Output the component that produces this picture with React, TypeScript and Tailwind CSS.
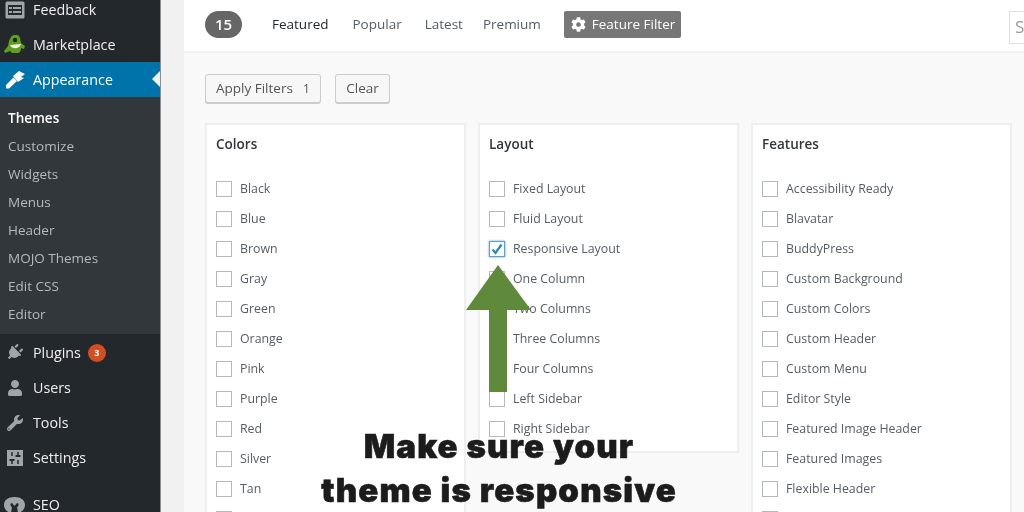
import React from "react";
import { FaCog, FaPlug, FaUser, FaWrench } from "react-icons/fa";

const colors = ["Black", "Blue", "Brown", "Gray", "Green", "Orange", "Pink", "Purple", "Red", "Silver", "Tan", "Turquoise"];
const layout = ["Fixed Layout", "Fluid Layout", "Responsive Layout", "One Column", "Two Columns", "Three Columns", "Four Columns", "Left Sidebar", "Right Sidebar"];
const features = ["Accessibility Ready", "Blavatar", "BuddyPress", "Custom Background", "Custom Colors", "Custom Header", "Custom Menu", "Editor Style", "Featured Image Header", "Featured Images", "Flexible Header", "Footer Widgets"];
const submenu = ["Customize", "Widgets", "Menus", "Header", "MOJO Themes", "Edit CSS", "Editor"];

function FeedbackIcon() {
  return (
    <svg width="20" height="18" viewBox="0 0 20 18">
      <rect x="0.5" y="0.5" width="19" height="17" rx="1.5" fill="#a0a5aa" />
      <rect x="3" y="4" width="14" height="10" fill="#23282d" />
      <rect x="4" y="6" width="3" height="2" fill="#a0a5aa" />
      <rect x="8" y="6" width="8" height="2" fill="#a0a5aa" />
      <rect x="4" y="10" width="3" height="2" fill="#a0a5aa" />
      <rect x="8" y="10" width="8" height="2" fill="#a0a5aa" />
    </svg>
  );
}

function MojoIcon() {
  return (
    <svg width="22" height="20" viewBox="0 0 22 20">
      <path d="M7 2 C9 -1 15 -1 16 3 L17 8 L21 11 L20 14 L17 13 C17 16 16 18 13 18 L8 18 L6 16 L1 18 L0 16 L4 11 L5 6 Z" fill="#5f9e1f" />
      <circle cx="11" cy="5" r="2.2" fill="#16300a" />
      <path d="M6 10 L17 9 C16 14 8 15 6 10 Z" fill="#f2f2e2" />
    </svg>
  );
}

function BrushIcon() {
  return (
    <svg width="20" height="18" viewBox="0 0 20 18">
      <path d="M8 5 L14 0 L20 3 L16 6 L19 7 L13 11 Z" fill="#ffffff" />
      <path d="M8.5 6.5 L12 10 L4 17.5 L1 17.5 L1 14 Z" fill="#ffffff" />
    </svg>
  );
}

function SlidersIcon() {
  return (
    <svg width="16" height="16" viewBox="0 0 16 16">
      <rect width="16" height="16" fill="#a0a5aa" />
      <path d="M5 2 V6 M5 10 V14 M11 2 V6 M11 10 V14" stroke="#23282d" strokeWidth="1.5" />
      <path d="M2.5 10 H7.5 M8.5 6 H13.5" stroke="#23282d" strokeWidth="2" />
    </svg>
  );
}

function SeoIcon() {
  return (
    <svg width="21" height="16" viewBox="0 0 21 16">
      <path d="M10.5 0 C4 0 0 3 0 8 C0 12 3 15 7 16 L8 10 C6 9 6 6 8 6 L10.5 9 L13 6 C15 6 15 9 13 10 L14 16 C18 15 21 12 21 8 C21 3 17 0 10.5 0 Z" fill="#a0a5aa" />
    </svg>
  );
}

function MenuItem({ icon, label, badge }: { icon: React.ReactNode; label: string; badge?: string }) {
  return (
    <div className="flex h-[35px] shrink-0 items-center text-[14.3px] text-[#eeeeee]">
      <div className="flex w-[33px] shrink-0 justify-center pr-[4px] text-[#a0a5aa]">{icon}</div>
      <span>{label}</span>
      {badge && (
        <span className="ml-[7px] flex h-[18px] w-[18px] items-center justify-center rounded-full bg-[#d54e21] text-[9px] font-bold text-white">
          {badge}
        </span>
      )}
    </div>
  );
}

function Option({ label, checked }: { label: string; checked?: boolean }) {
  return (
    <div className="flex h-[30px] shrink-0 items-center gap-[8px] text-[12.35px] text-[#555d66]">
      <span
        className={
          checked
            ? "flex h-[16px] w-[16px] shrink-0 items-center justify-center border border-[#5b9dd9] bg-white shadow-[0_0_2px_rgba(30,140,190,0.8)]"
            : "h-[16px] w-[16px] shrink-0 border border-[#b4b9be] bg-white"
        }
      >
        {checked && (
          <svg width="12" height="12" viewBox="0 0 12 12">
            <path d="M1.5 6.5 L4.5 10 L10.5 1.5" fill="none" stroke="#1e8cbe" strokeWidth="2.2" />
          </svg>
        )}
      </span>
      <span className="whitespace-nowrap">{label}</span>
    </div>
  );
}

function FilterPanel({ title, items, className }: { title: string; items: string[]; className?: string }) {
  return (
    <div className={"flex w-[261px] shrink-0 flex-col overflow-hidden border-2 border-[#eeeeee] bg-white pl-[9px] " + (className ?? "")}>
      <h4 className="mt-[9px] mb-[20px] text-[13.5px] leading-[20px] font-semibold text-[#32373c]">{title}</h4>
      {items.map((item) => (
        <Option key={item} label={item} checked={item === "Responsive Layout"} />
      ))}
    </div>
  );
}

export default function App() {
  return (
    <div className="relative flex h-[512px] w-[1024px] overflow-hidden bg-[#f1f1f1] font-['Open_Sans',sans-serif] blur-[0.4px]">
      <aside className="-mt-[8px] flex w-[161px] shrink-0 flex-col overflow-hidden border-r border-[#8a8d90] bg-[#23282d]">
        <MenuItem icon={<FeedbackIcon />} label="Feedback" />
        <MenuItem icon={<MojoIcon />} label="Marketplace" />
        <div className="relative flex h-[35px] shrink-0 items-center bg-[#0073aa] text-[14.3px] text-white">
          <div className="flex w-[33px] shrink-0 justify-center pr-[4px]">
            <BrushIcon />
          </div>
          <span>Appearance</span>
          <span className="absolute top-[9px] right-0 h-0 w-0 border-y-[8px] border-r-[8px] border-y-transparent border-r-[#f1f1f1]" />
        </div>
        <div className="flex h-[237px] shrink-0 flex-col bg-[#32373c] pt-[7px] pl-[8px] text-[13.5px] text-[#b4b9be]">
          <div className="flex h-[28px] items-center font-semibold text-white">Themes</div>
          {submenu.map((s) => (
            <div key={s} className="flex h-[28px] shrink-0 items-center">
              {s}
            </div>
          ))}
        </div>
        <div className="h-[1px] shrink-0" />
        <MenuItem icon={<FaPlug size={17} className="rotate-45" />} label="Plugins" badge="3" />
        <MenuItem icon={<FaUser size={16} />} label="Users" />
        <MenuItem icon={<FaWrench size={16} />} label="Tools" />
        <MenuItem icon={<SlidersIcon />} label="Settings" />
        <div className="h-[12px] shrink-0" />
        <MenuItem icon={<SeoIcon />} label="SEO" />
      </aside>

      <main className="ml-[23px] flex min-w-0 flex-1 flex-col bg-[#f9f9f9]">
        <div className="flex h-[53px] shrink-0 items-center border-b-2 border-[#f1f1f1] bg-white pb-[3px] pl-[21px] text-[13.5px] text-[#555d66]">
          <span className="mt-[1px] flex h-[27px] w-[37px] items-center justify-center rounded-full bg-[#666666] text-[15px] font-semibold text-white">15</span>
          <span className="ml-[30px] text-[#23282d]">Featured</span>
          <span className="ml-[24px]">Popular</span>
          <span className="ml-[23px]">Latest</span>
          <span className="ml-[20px]">Premium</span>
          <span className="ml-[23px] flex h-[27px] w-[117px] items-center gap-[6px] rounded-[2px] bg-[#777777] pl-[7px] text-white">
            <FaCog size={15} />
            Feature Filter
          </span>
          <span className="mt-[6px] ml-auto h-[33px] w-[15px] overflow-hidden border border-r-0 border-[#dddddd] pl-[5px] text-[17px] leading-[30px] text-[#9a9a9a]">S</span>
        </div>

        <div className="mt-[21px] flex shrink-0 gap-[14px] pl-[21px] text-[13.5px] text-[#555555]">
          <div className="flex h-[29px] w-[116px] items-center rounded-[3px] border border-[#cccccc] bg-[#f7f7f7] pl-[10px] shadow-[0_1px_0_#cccccc]">
            Apply Filters
            <span className="ml-[10px] text-[12px]">1</span>
          </div>
          <div className="flex h-[29px] w-[55px] items-center justify-center rounded-[3px] border border-[#cccccc] bg-[#f7f7f7] shadow-[0_1px_0_#cccccc]">Clear</div>
        </div>

        <div className="mt-[20px] flex min-h-0 flex-1 items-start gap-[12px] pl-[21px]">
          <FilterPanel title="Colors" items={colors} className="h-[420px]" />
          <FilterPanel title="Layout" items={layout} className="h-[330px]" />
          <FilterPanel title="Features" items={features} className="h-[420px]" />
        </div>
      </main>

      <svg className="absolute top-[265px] left-[466px]" width="65" height="127" viewBox="0 0 65 127">
        <path d="M32 0 L65 45 L41 45 L41 127 L23 127 L23 45 L0 45 Z" fill="#5f8a3c" />
      </svg>

      <div className="absolute top-[424px] left-[299px] w-[400px] text-center font-['Inter',sans-serif] text-[33px] leading-[44px] font-black tracking-[1.15px] text-[#1c1c1c] [-webkit-text-stroke:0.6px_#1c1c1c]">
        <div className="whitespace-nowrap">Make sure your</div>
        <div className="whitespace-nowrap">theme is responsive</div>
      </div>
    </div>
  );
}
